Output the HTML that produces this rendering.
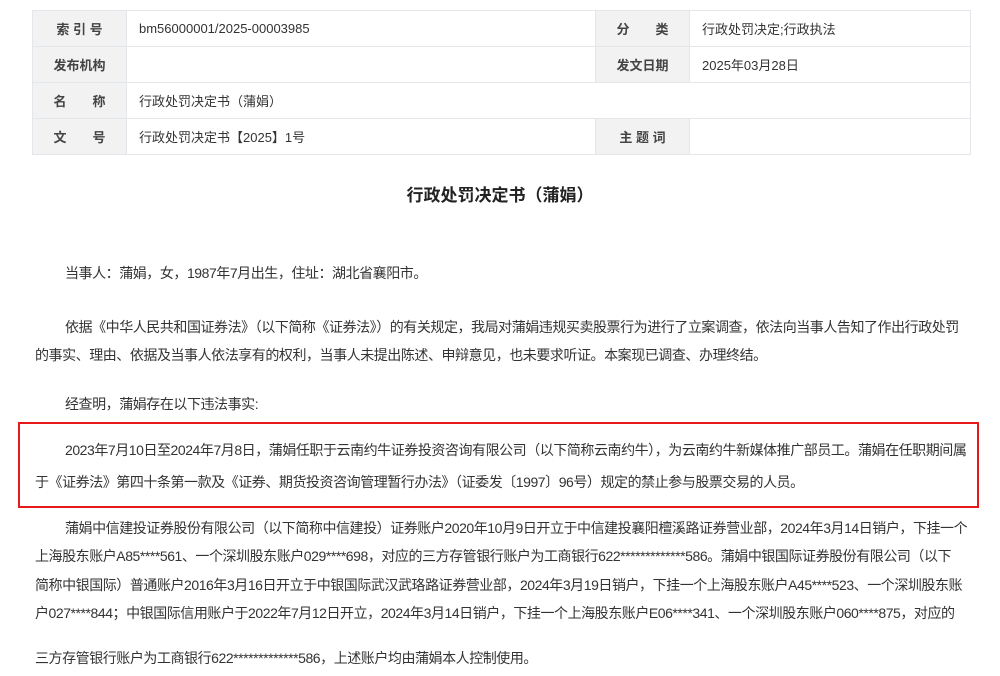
<!DOCTYPE html>
<html><head><meta charset="utf-8"><style>
body{margin:0;background:#fff;width:1000px;height:676px;overflow:hidden;font-family:"Liberation Sans","Noto Sans CJK SC",sans-serif;color:#333;position:relative}
table{position:absolute;left:32px;top:10px;border-collapse:collapse;font-size:13px}
td{border:1px solid #e3e6ea;height:35px;padding:0;}
td.l{background:#f2f2f2;width:93px;text-align:center;font-weight:bold;color:#444}
td.v{padding-left:12px}
.t{position:absolute;left:0;width:1000px;top:181px;text-align:center;font-size:17px;font-weight:bold;color:#222}
.ln{position:absolute;white-space:nowrap;font-size:14px;color:#333;left:35px;letter-spacing:-0.45px}
.box{position:absolute;left:18px;top:422px;width:957px;height:82px;border:2px solid #e8191b;box-sizing:content-box}
</style></head><body>
<table>
<tr><td class="l">索 引 号</td><td class="v" style="width:456px">bm56000001/2025-00003985</td><td class="l">分　　类</td><td class="v" style="width:268px">行政处罚决定;行政执法</td></tr>
<tr><td class="l">发布机构</td><td class="v"></td><td class="l">发文日期</td><td class="v">2025年03月28日</td></tr>
<tr><td class="l">名　　称</td><td class="v" colspan="3">行政处罚决定书（蒲娟）</td></tr>
<tr><td class="l">文　　号</td><td class="v">行政处罚决定书【2025】1号</td><td class="l">主 题 词</td><td class="v"></td></tr>
</table>
<div class="t">行政处罚决定书（蒲娟）</div>
<div class="ln" style="left:65px;top:263px">当事人：蒲娟，女，1987年7月出生，住址：湖北省襄阳市。</div>
<div class="ln" style="left:65px;top:317px">依据《中华人民共和国证券法》（以下简称《证券法》）的有关规定，我局对蒲娟违规买卖股票行为进行了立案调查，依法向当事人告知了作出行政处罚</div>
<div class="ln" style="top:345px">的事实、理由、依据及当事人依法享有的权利，当事人未提出陈述、申辩意见，也未要求听证。本案现已调查、办理终结。</div>
<div class="ln" style="left:65px;top:394px">经查明，蒲娟存在以下违法事实:</div>
<div class="box"></div>
<div class="ln" style="left:65px;top:440px">2023年7月10日至2024年7月8日，蒲娟任职于云南约牛证券投资咨询有限公司（以下简称云南约牛），为云南约牛新媒体推广部员工。蒲娟在任职期间属</div>
<div class="ln" style="top:472px">于《证券法》第四十条第一款及《证券、期货投资咨询管理暂行办法》（证委发〔1997〕96号）规定的禁止参与股票交易的人员。</div>
<div class="ln" style="left:65px;top:518px">蒲娟中信建投证券股份有限公司（以下简称中信建投）证券账户2020年10月9日开立于中信建投襄阳檀溪路证券营业部，2024年3月14日销户，下挂一个</div>
<div class="ln" style="top:546px">上海股东账户A85****561、一个深圳股东账户029****698，对应的三方存管银行账户为工商银行622*************586。蒲娟中银国际证券股份有限公司（以下</div>
<div class="ln" style="top:575px">简称中银国际）普通账户2016年3月16日开立于中银国际武汉武珞路证券营业部，2024年3月19日销户，下挂一个上海股东账户A45****523、一个深圳股东账</div>
<div class="ln" style="top:603px">户027****844；中银国际信用账户于2022年7月12日开立，2024年3月14日销户，下挂一个上海股东账户E06****341、一个深圳股东账户060****875，对应的</div>
<div class="ln" style="top:648px">三方存管银行账户为工商银行622*************586，上述账户均由蒲娟本人控制使用。</div>
</body></html>
